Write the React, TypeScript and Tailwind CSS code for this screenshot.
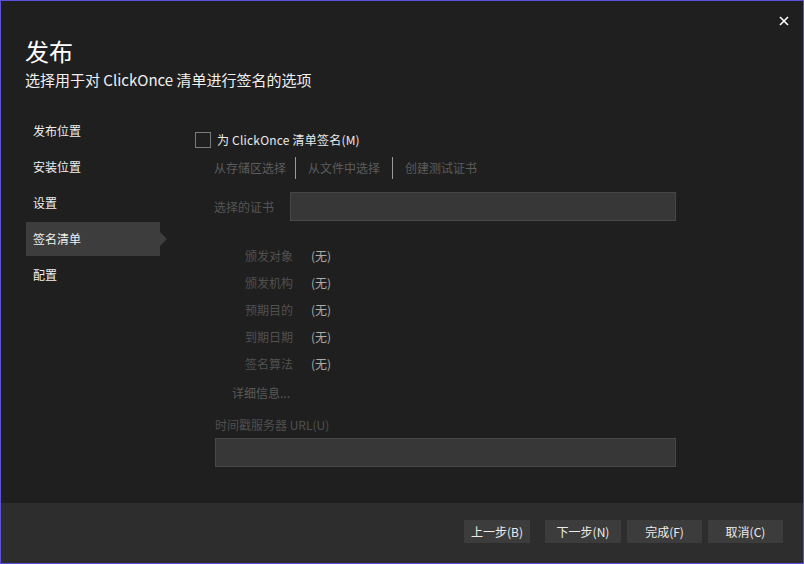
import React from 'react';

const navItems = ['发布位置', '安装位置', '设置', '签名清单', '配置'];
const certFields = ['颁发对象', '颁发机构', '预期目的', '到期日期', '签名算法'];

export default function App() {
  const selected = '签名清单';

  return (
    <div
      className="w-[804px] h-[564px] flex flex-col bg-[#1f1f1f] border border-[#5b50e0] text-[12px] text-[#f0f0f0] select-none"
      style={{ fontFamily: '"Noto Sans CJK SC", "Noto Sans", sans-serif' }}
    >
      {/* Header */}
      <div className="h-[100px] flex pl-[24px] pr-[14px]">
        <div className="flex-1 pt-[34px]">
          <h1 className="text-[24px] leading-[32px] text-white">发布</h1>
          <p className="mt-[3px] text-[15px] leading-[20px] text-[#f0f0f0]">选择用于对 ClickOnce 清单进行签名的选项</p>
        </div>
        <button className="mt-[15px] w-[10px] h-[10px] flex items-center justify-center">
          <svg width="10" height="10" viewBox="0 0 10 10">
            <path d="M1 1 L9 9 M9 1 L1 9" stroke="#ffffff" strokeWidth="1.6" />
          </svg>
        </button>
      </div>

      {/* Body */}
      <div className="flex-1 flex">
        {/* Side nav */}
        <div className="ml-[25px] w-[134px] pt-[13px] flex flex-col gap-[2px]">
          {navItems.map((item) => (
            <div
              key={item}
              className={`relative h-[34px] flex items-center px-[7px] leading-none ${
                item === selected ? 'bg-[#3d3d3d]' : ''
              }`}
            >
              {item}
              {item === selected && (
                <span className="absolute left-full top-1/2 -translate-y-1/2 w-0 h-0 border-y-[7px] border-y-transparent border-l-[7px] border-l-[#3d3d3d]"></span>
              )}
            </div>
          ))}
        </div>

        {/* Content */}
        <div className="ml-[35px] flex flex-col">
          <div className="mt-[29px] h-[20px] flex items-center gap-[6px]">
            <span className="w-[16px] h-[16px] border border-[#7c7c7c]"></span>
            <span className="text-[#eaeaea] tracking-[0.2px]">为 ClickOnce 清单签名(M)</span>
          </div>

          <div className="mt-[7px] h-[22px] flex pl-[19px] text-[#5c5c5c]">
            <span className="flex items-center pr-[9px] border-r border-[#9a9a9a]">从存储区选择</span>
            <span className="flex items-center pl-[12px] pr-[12px] border-r border-[#9a9a9a]">从文件中选择</span>
            <span className="flex items-center pl-[12px]">创建测试证书</span>
          </div>

          <div className="mt-[13px] flex items-center pl-[19px]">
            <span className="w-[76px] text-[#555555]">选择的证书</span>
            <div className="w-[386px] h-[29px] bg-[#373737] border border-[#474747]"></div>
          </div>

          <div className="mt-[21px] flex flex-col pl-[50px]">
            {certFields.map((f) => (
              <div key={f} className="h-[27px] flex items-center gap-[18px]">
                <span className="w-[48px] text-[#515151]">{f}</span>
                <span className="text-[#aaaaaa]">(无)</span>
              </div>
            ))}
          </div>

          <div className="mt-[2px] h-[27px] flex items-center pl-[37px] text-[#5a5a5a]">详细信息...</div>

          <div className="mt-[9px] h-[20px] flex items-center pl-[20px] text-[#4f4f4f]">时间戳服务器 URL(U)</div>

          <div className="mt-[3px] ml-[20px] w-[461px] h-[29px] bg-[#373737] border border-[#474747]"></div>
        </div>
      </div>

      {/* Footer */}
      <div className="h-[60px] bg-[#2d2d2d] flex justify-end items-start pt-[17px] pr-[20px] text-[#ececec]">
        <button className="w-[66px] h-[23px] bg-[#3c3c3c] flex items-center justify-center">上一步(B)</button>
        <button className="ml-[15px] w-[76px] h-[23px] bg-[#3c3c3c] flex items-center justify-center">下一步(N)</button>
        <button className="ml-[6px] w-[75px] h-[23px] bg-[#3c3c3c] flex items-center justify-center">完成(F)</button>
        <button className="ml-[6px] w-[75px] h-[23px] bg-[#3c3c3c] flex items-center justify-center">取消(C)</button>
      </div>
    </div>
  );
}
